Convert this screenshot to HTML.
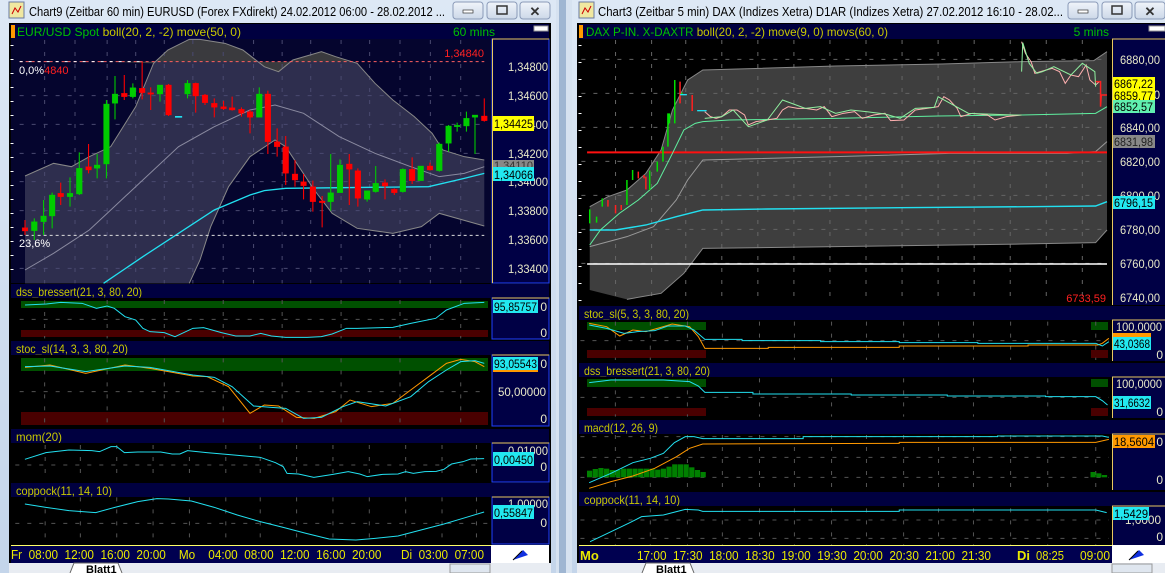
<!DOCTYPE html>
<html><head><meta charset="utf-8">
<style>
html,body{margin:0;padding:0;background:#cfdcec;overflow:hidden}
svg{display:block;font-family:"Liberation Sans",Arial,sans-serif}
</style></head><body>
<svg width="1165" height="573" viewBox="0 0 1165 573" xmlns="http://www.w3.org/2000/svg">
<defs>
<linearGradient id="tb" x1="0" y1="0" x2="0" y2="1"><stop offset="0" stop-color="#dde8f5"/><stop offset="1" stop-color="#c4d5ea"/></linearGradient>
<linearGradient id="btn" x1="0" y1="0" x2="0" y2="1"><stop offset="0" stop-color="#f0f4fa"/><stop offset="1" stop-color="#ccd8e8"/></linearGradient>
</defs>
<rect width="1165" height="573" fill="#cfdcec"/>
<rect x="556" y="0" width="16" height="573" fill="#d6e2f0"/>
<rect x="559" y="0" width="7" height="573" fill="#9fb6d2"/>

<!-- ============ LEFT WINDOW ============ -->
<rect x="0" y="0" width="556" height="573" fill="url(#tb)"/>
<rect x="9" y="2" width="15" height="16" fill="#f0e8a0" stroke="#6a7aa0"/>
<path d="M12 14 L15 8 L18 12 L21 6" stroke="#c00" fill="none"/>
<text x="29" y="16" font-size="12.5" fill="#000" textLength="416" lengthAdjust="spacingAndGlyphs">Chart9 (Zeitbar 60 min)  EURUSD (Forex FXdirekt) 24.02.2012 06:00 - 28.02.2012 ...</text>
<g stroke="#8a9ab8" fill="url(#btn)">
<rect x="453" y="2" width="30" height="17" rx="3"/><rect x="487" y="2" width="30" height="17" rx="3"/><rect x="520" y="2" width="30" height="17" rx="3"/>
</g>
<rect x="463" y="10" width="10" height="3" fill="#fff" stroke="#333" stroke-width="0.7"/>
<rect x="497" y="6" width="10" height="8" fill="none" stroke="#333" stroke-width="1.5"/>
<text x="535" y="16" font-size="13" font-weight="bold" fill="#333" text-anchor="middle">✕</text>

<rect x="9" y="23" width="542" height="540" fill="#000"/>
<rect x="11" y="24" width="538" height="15" fill="#000040"/>
<rect x="11" y="25" width="4" height="13" fill="#ff9900"/>
<text x="17" y="36" font-size="12" fill="#00c000" textLength="224" lengthAdjust="spacingAndGlyphs">EUR/USD Spot <tspan fill="#c8c800">boll(20, 2, -2) move(50, 0)</tspan></text>
<text x="453" y="36" font-size="12" fill="#00c000">60 mins</text>
<rect x="534" y="26" width="14" height="5" fill="#fff" stroke="#999"/>

<rect x="11" y="39" width="481" height="244" fill="#05052e"/>
<g transform="scale(0.35714,0.33333)">
<polygon fill="#2e2e4e" points="70,528 150,490 200,500 250,470 310,440 380,320 430,190 470,150 530,118 560,118 630,130 680,150 740,200 780,215 820,180 900,155 940,170 1000,190 1050,250 1100,300 1160,350 1210,400 1240,450 1300,470 1356,480 1356,678 1230,640 1180,680 1100,700 1000,685 930,640 880,570 800,440 770,420 700,470 640,560 590,680 560,780 530,850 70,850"/>
<polygon fill="#3a3a3e" points="430,190 470,150 530,118 560,118 630,130 680,150 740,200 780,215 820,180 900,155 940,170 990,185 300,185"/>
<g stroke="#4a4a70" stroke-dasharray="4,8" fill="none">
<path d="M125 120V850M210 120V850M300 120V850M380 120V850M460 120V850M540 120V850M625 120V850M710 120V850M790 120V850M870 120V850M955 120V850M1035 120V850M1120 120V850M1205 120V850M1290 120V850" vector-effect="non-scaling-stroke"/>
<path d="M55 287H1356M55 373H1356M55 460H1356M55 545H1356M55 632H1356M55 805H1356" vector-effect="non-scaling-stroke"/>
</g>
<polyline fill="none" stroke="#8a8aa0" vector-effect="non-scaling-stroke" points="70,810 150,760 250,690 300,640 400,540 500,440 600,380 700,330 770,315 850,340 950,410 1050,460 1150,500 1230,530 1300,520 1356,500"/>
<polyline fill="none" stroke="#888" vector-effect="non-scaling-stroke" points="70,528 150,490 200,500 250,470 310,440 380,320 430,190 470,150 530,118 560,118 630,130 680,150 740,200 780,215 820,180 900,155 940,170 1000,190 1050,250 1100,300 1160,350 1210,400 1240,450 1300,470 1356,480"/>
<polyline fill="none" stroke="#888" vector-effect="non-scaling-stroke" points="1356,678 1230,640 1180,680 1100,700 1000,685 930,640 880,570 800,440 770,420 700,470 640,560 590,680 560,780 530,850"/>
<polyline fill="none" stroke="#22e0f0" stroke-width="1.3" vector-effect="non-scaling-stroke" points="290,850 400,770 500,700 600,630 700,585 740,572 800,565 1200,560 1300,535 1356,520"/>
<path d="M55 185H1356" stroke="#ff6060" stroke-dasharray="3,3" vector-effect="non-scaling-stroke"/>
<path d="M55 185H400" stroke="#fff" stroke-dasharray="3,6" vector-effect="non-scaling-stroke"/>
<path d="M55 706H1356" stroke="#ddd" stroke-dasharray="3,3" vector-effect="non-scaling-stroke"/>
<rect x="490" y="348" width="20" height="5" fill="#22e0f0"/>
<g fill="#ff0000" stroke="#ff0000">
<path d="M70 660V705M170 548V615M248 432V520M348 225V300M398 185V298M422 262V330M472 252V348M548 248V338M574 282V315M600 295V352M626 303V330M650 290V332M676 322V350M700 330V400M750 272V462M776 385V470M800 408V555M826 480V560M850 522V598M876 542V635M902 588V682M978 462V615M1002 505V620M1078 538V598M1104 565V585M1154 472V552M1204 488V512M1356 295V365" stroke-width="3"/>
<rect x="62" y="683" width="16" height="10"/><rect x="162" y="580" width="16" height="10"/><rect x="240" y="500" width="16" height="10"/><rect x="340" y="280" width="16" height="10"/><rect x="390" y="265" width="16" height="13"/><rect x="414" y="278" width="16" height="5"/><rect x="464" y="255" width="16" height="90"/><rect x="540" y="250" width="16" height="38"/><rect x="566" y="285" width="16" height="23"/><rect x="592" y="310" width="16" height="12"/><rect x="618" y="320" width="16" height="6"/><rect x="642" y="323" width="16" height="7"/><rect x="668" y="328" width="16" height="12"/><rect x="692" y="335" width="16" height="17"/><rect x="742" y="282" width="16" height="143"/><rect x="768" y="425" width="16" height="15"/><rect x="792" y="440" width="16" height="80"/><rect x="818" y="522" width="16" height="18"/><rect x="842" y="545" width="16" height="12"/><rect x="868" y="560" width="16" height="45"/><rect x="894" y="603" width="16" height="5"/><rect x="970" y="492" width="16" height="16"/><rect x="994" y="512" width="16" height="83"/><rect x="1070" y="548" width="16" height="10"/><rect x="1096" y="568" width="16" height="10"/><rect x="1146" y="508" width="16" height="34"/><rect x="1196" y="498" width="16" height="12"/><rect x="1348" y="348" width="16" height="14"/>
</g>
<g fill="#00cc00" stroke="#00cc00">
<path d="M96 655V720M122 600V705M146 578V685M196 532V620M222 457V585M272 462V535M298 300V535M322 228V358M372 250V295M448 255V305M525 240V295M726 262V350M926 462V632M952 478V578M1028 572V605M1052 498V578M1128 505V578M1178 498V542M1230 428V515M1256 375V455M1280 368V395M1306 335V395M1330 345V462" stroke-width="3"/>
<rect x="88" y="665" width="16" height="27"/><rect x="114" y="648" width="16" height="17"/><rect x="138" y="585" width="16" height="63"/><rect x="188" y="580" width="16" height="10"/><rect x="214" y="505" width="16" height="77"/><rect x="264" y="495" width="16" height="10"/><rect x="290" y="312" width="16" height="180"/><rect x="314" y="282" width="16" height="28"/><rect x="364" y="263" width="16" height="27"/><rect x="440" y="255" width="16" height="27"/><rect x="517" y="250" width="16" height="32"/><rect x="718" y="282" width="16" height="70"/><rect x="918" y="578" width="16" height="27"/><rect x="944" y="495" width="16" height="83"/><rect x="1020" y="572" width="16" height="26"/><rect x="1044" y="550" width="16" height="25"/><rect x="1120" y="508" width="16" height="67"/><rect x="1170" y="498" width="16" height="44"/><rect x="1222" y="432" width="16" height="80"/><rect x="1248" y="378" width="16" height="52"/><rect x="1272" y="376" width="16" height="4"/><rect x="1298" y="355" width="16" height="23"/><rect x="1322" y="345" width="16" height="7"/>
</g>
</g>
<text x="19" y="74" font-size="11" fill="#fff">0,0%<tspan fill="#ff2020">4840</tspan></text>
<text x="19" y="247" font-size="11" fill="#fff">23,6%</text>
<text x="484" y="57" font-size="11" fill="#ff2020" text-anchor="end">1,34840</text>
<path d="M12 45V283" stroke="#fff" stroke-dasharray="1,13" stroke-width="3"/>
<rect x="492" y="39" width="57" height="244" fill="#000045" stroke="#2040ff"/>
<path d="M492 39H549M492.5 39V283" stroke="#e8c860"/>
<g font-size="12" fill="#e8e8c8">
<text x="508" y="71" textLength="40" lengthAdjust="spacingAndGlyphs">1,34800</text><text x="508" y="100" textLength="40" lengthAdjust="spacingAndGlyphs">1,34600</text><text x="508" y="129" textLength="40" lengthAdjust="spacingAndGlyphs">1,34400</text><text x="508" y="158" textLength="40" lengthAdjust="spacingAndGlyphs">1,34200</text><text x="508" y="186" textLength="40" lengthAdjust="spacingAndGlyphs">1,34000</text><text x="508" y="215" textLength="40" lengthAdjust="spacingAndGlyphs">1,33800</text><text x="508" y="244" textLength="40" lengthAdjust="spacingAndGlyphs">1,33600</text><text x="508" y="273" textLength="40" lengthAdjust="spacingAndGlyphs">1,33400</text>
</g>
<rect x="493" y="116" width="41" height="15" fill="#ffff00"/><text x="494" y="128" font-size="12" fill="#000" textLength="39" lengthAdjust="spacingAndGlyphs">1,34425</text>
<rect x="493" y="160" width="41" height="9" fill="#888"/><text x="494" y="169" font-size="11" fill="#333" textLength="39" lengthAdjust="spacingAndGlyphs">1,34110</text>
<rect x="493" y="167" width="41" height="14" fill="#22e8f0"/><text x="494" y="179" font-size="12" fill="#000" textLength="39" lengthAdjust="spacingAndGlyphs">1,34066</text>

<!-- dss panel -->
<rect x="11" y="284" width="538" height="14" fill="#000040"/>
<text x="16" y="296" font-size="12" fill="#c8c800" textLength="126" lengthAdjust="spacingAndGlyphs">dss_bressert(21, 3, 80, 20)</text>
<rect x="11" y="298" width="481" height="41" fill="#000"/>
<rect x="21" y="301" width="467" height="7" fill="#005000"/>
<rect x="21" y="330" width="467" height="7" fill="#4a0000"/>
<g transform="translate(0,280) scale(0.35714,0.33333)">
<g stroke="#555" stroke-dasharray="4,8"><path d="M125 60V175M300 60V175M460 60V175M625 60V175M790 60V175M955 60V175M1120 60V175M1290 60V175M55 118H1356" vector-effect="non-scaling-stroke"/></g>
<polyline fill="none" stroke="#22e0f0" vector-effect="non-scaling-stroke" points="70,75 130,72 170,67 230,70 270,85 300,78 320,85 350,110 380,120 400,145 420,155 460,158 490,170 540,145 570,143 620,158 660,168 700,168 730,160 760,168 800,172 860,172 900,170 930,162 970,145 1000,145 1100,142 1150,130 1220,115 1250,90 1300,70 1356,67"/>
<g stroke="#555" stroke-dasharray="4,8"><path d="M125 235V435M300 235V435M460 235V435M625 235V435M790 235V435M955 235V435M1120 235V435M1290 235V435M55 335H1356" vector-effect="non-scaling-stroke"/></g>
<polyline fill="none" stroke="#ff9900" vector-effect="non-scaling-stroke" points="70,262 140,255 240,280 350,255 420,265 540,288 580,290 640,320 700,400 740,375 780,378 830,412 880,415 940,395 980,360 1040,380 1100,370 1150,330 1200,290 1250,250 1290,238 1330,245 1356,260"/>
<polyline fill="none" stroke="#22e0f0" vector-effect="non-scaling-stroke" points="70,260 140,258 240,275 350,258 420,262 540,285 600,292 650,320 710,378 760,382 800,385 850,415 900,412 960,380 1000,365 1080,378 1150,350 1200,305 1250,270 1290,245 1330,242 1356,250"/>
</g>
<rect x="492" y="298" width="57" height="41" fill="#000045" stroke="#2040ff"/><path d="M492 298H549" stroke="#e8c860"/>
<rect x="493" y="300" width="45" height="13" fill="#22e8f0"/><text x="494" y="311" font-size="12" fill="#000" textLength="43" lengthAdjust="spacingAndGlyphs">95,85757</text>
<text x="547" y="311" font-size="12" fill="#e8e8c8" text-anchor="end">0</text><text x="547" y="337" font-size="12" fill="#e8e8c8" text-anchor="end">0</text>

<!-- stoc panel -->
<rect x="11" y="341" width="538" height="14" fill="#000040"/>
<text x="16" y="353" font-size="12" fill="#c8c800" textLength="112" lengthAdjust="spacingAndGlyphs">stoc_sl(14, 3, 3, 80, 20)</text>
<rect x="11" y="355" width="481" height="71" fill="#000"/>
<rect x="21" y="358" width="467" height="13" fill="#005000"/>
<rect x="21" y="412" width="467" height="13" fill="#4a0000"/>
<g transform="translate(0,280) scale(0.35714,0.33333)">
<g stroke="#555" stroke-dasharray="4,8"><path d="M125 235V435M300 235V435M460 235V435M625 235V435M790 235V435M955 235V435M1120 235V435M1290 235V435M55 335H1356" vector-effect="non-scaling-stroke"/></g>
<polyline fill="none" stroke="#ff9900" vector-effect="non-scaling-stroke" points="70,262 140,255 240,280 350,255 420,265 540,288 580,290 640,320 700,400 740,375 780,378 830,412 880,415 940,395 980,360 1040,380 1100,370 1150,330 1200,290 1250,250 1290,238 1330,245 1356,260"/>
<polyline fill="none" stroke="#22e0f0" vector-effect="non-scaling-stroke" points="70,260 140,258 240,275 350,258 420,262 540,285 600,292 650,320 710,378 760,382 800,385 850,415 900,412 960,380 1000,365 1080,378 1150,350 1200,305 1250,270 1290,245 1330,242 1356,250"/>
</g>
<rect x="492" y="355" width="57" height="71" fill="#000045" stroke="#2040ff"/><path d="M492 355H549" stroke="#e8c860"/>
<rect x="493" y="369" width="45" height="3" fill="#ff9900"/>
<rect x="493" y="357" width="45" height="13" fill="#22e8f0"/><text x="494" y="368" font-size="12" fill="#000" textLength="43" lengthAdjust="spacingAndGlyphs">93,05543</text>
<text x="547" y="368" font-size="12" fill="#e8e8c8" text-anchor="end">0</text>
<text x="498" y="396" font-size="12" fill="#e8e8c8" textLength="48" lengthAdjust="spacingAndGlyphs">50,00000</text>
<text x="547" y="423" font-size="12" fill="#e8e8c8" text-anchor="end">0</text>

<!-- mom panel -->
<rect x="11" y="429" width="538" height="14" fill="#000040"/>
<text x="16" y="441" font-size="12" fill="#c8c800" textLength="46" lengthAdjust="spacingAndGlyphs">mom(20)</text>
<rect x="11" y="443" width="481" height="39" fill="#000"/>
<g transform="translate(0,420) scale(0.3827,0.33333)">
<g stroke="#555" stroke-dasharray="4,8"><path d="M118 75V180M210 75V180M305 75V180M400 75V180M495 75V180M590 75V180M680 75V180M775 75V180M870 75V180M965 75V180M1060 75V180M1155 75V180M1245 75V180M40 135H1280" vector-effect="non-scaling-stroke"/></g>
<polyline fill="none" stroke="#22e0f0" vector-effect="non-scaling-stroke" points="65,118 120,98 180,90 240,92 260,95 290,80 305,80 325,98 360,96 420,96 450,102 470,102 490,92 540,98 600,104 680,112 720,128 740,140 750,160 780,162 820,172 870,163 910,155 940,162 960,170 1000,163 1040,162 1060,155 1080,160 1110,155 1140,154 1160,148 1180,132 1210,125 1230,117 1265,116"/>
</g>
<rect x="492" y="443" width="57" height="39" fill="#000045" stroke="#2040ff"/><path d="M492 443H549" stroke="#e8c860"/>
<text x="508" y="455" font-size="12" fill="#e8e8c8" textLength="40" lengthAdjust="spacingAndGlyphs">0,01000</text>
<rect x="493" y="452" width="41" height="14" fill="#22e8f0"/><text x="494" y="464" font-size="12" fill="#000" textLength="39" lengthAdjust="spacingAndGlyphs">0,00450</text>
<text x="547" y="471" font-size="12" fill="#e8e8c8" text-anchor="end">0</text>

<!-- coppock panel -->
<rect x="11" y="483" width="538" height="14" fill="#000040"/>
<text x="16" y="495" font-size="12" fill="#c8c800" textLength="96" lengthAdjust="spacingAndGlyphs">coppock(11, 14, 10)</text>
<rect x="11" y="497" width="481" height="47" fill="#000"/>
<g transform="translate(0,420) scale(0.3827,0.33333)">
<g stroke="#555" stroke-dasharray="4,8"><path d="M118 232V370M210 232V370M305 232V370M400 232V370M495 232V370M590 232V370M680 232V370M775 232V370M870 232V370M965 232V370M1060 232V370M1155 232V370M1245 232V370M40 310H1280" vector-effect="non-scaling-stroke"/></g>
<polyline fill="none" stroke="#22e0f0" vector-effect="non-scaling-stroke" points="65,252 120,262 180,272 250,278 300,262 360,245 410,236 440,237 500,243 560,262 620,285 680,305 740,322 800,340 860,357 930,360 980,355 1040,348 1100,330 1160,312 1210,295 1265,276"/>
</g>
<rect x="492" y="497" width="57" height="47" fill="#000045" stroke="#2040ff"/><path d="M492 497H549" stroke="#e8c860"/>
<text x="508" y="508" font-size="12" fill="#e8e8c8" textLength="40" lengthAdjust="spacingAndGlyphs">1,00000</text>
<rect x="493" y="505" width="41" height="14" fill="#22e8f0"/><text x="494" y="517" font-size="12" fill="#000" textLength="39" lengthAdjust="spacingAndGlyphs">0,55847</text>
<text x="547" y="527" font-size="12" fill="#e8e8c8" text-anchor="end">0</text>

<rect x="11" y="545" width="480" height="18" fill="#000050"/>
<path d="M11 545.5H491" stroke="#ffff66"/>
<text x="11" y="559" font-size="12.5" fill="#e8e800" xml:space="preserve" textLength="473" lengthAdjust="spacingAndGlyphs">Fr  08:00  12:00  16:00  20:00    Mo    04:00  08:00  12:00  16:00  20:00      Di  03:00  07:00</text>
<rect x="491" y="545" width="58" height="18" fill="#fff"/>
<path d="M513 560 L523 550 L528 555 Z" fill="#1030e0"/><path d="M513 560 L522 551" stroke="#000"/>
<rect x="9" y="563" width="542" height="10" fill="#e8ecf2"/>
<path d="M70 573 L74 563 H118 L122 573" fill="#fff" stroke="#666"/>
<text x="86" y="573" font-size="11" font-weight="bold" fill="#000">Blatt1</text>
<rect x="450" y="564" width="40" height="9" fill="#dfe6ef" stroke="#999"/>

<!-- ============ RIGHT WINDOW ============ -->
<rect x="572" y="0" width="593" height="573" fill="url(#tb)"/>
<rect x="579" y="2" width="15" height="16" fill="#f0e8a0" stroke="#6a7aa0"/>
<path d="M582 14 L585 8 L588 12 L591 6" stroke="#c00" fill="none"/>
<text x="598" y="16" font-size="12.5" fill="#000" textLength="465" lengthAdjust="spacingAndGlyphs">Chart3 (Zeitbar 5 min)  DAX (Indizes Xetra) D1AR (Indizes Xetra) 27.02.2012 16:10 - 28.02...</text>
<g stroke="#8a9ab8" fill="url(#btn)">
<rect x="1068" y="2" width="30" height="17" rx="3"/><rect x="1102" y="2" width="30" height="17" rx="3"/><rect x="1135" y="2" width="30" height="17" rx="3"/>
</g>
<rect x="1078" y="10" width="10" height="3" fill="#fff" stroke="#333" stroke-width="0.7"/>
<rect x="1112" y="6" width="10" height="8" fill="none" stroke="#333" stroke-width="1.5"/>
<text x="1150" y="16" font-size="13" font-weight="bold" fill="#333" text-anchor="middle">✕</text>

<rect x="577" y="23" width="588" height="540" fill="#000"/>
<rect x="579" y="24" width="586" height="15" fill="#000040"/>
<rect x="579" y="25" width="4" height="13" fill="#ff9900"/>
<text x="586" y="36" font-size="12" fill="#00c000" textLength="302" lengthAdjust="spacingAndGlyphs">DAX P-IN. X-DAXTR <tspan fill="#c8c800">boll(20, 2, -2) move(9, 0) movs(60, 0)</tspan></text>
<text x="1109" y="36" font-size="12" fill="#00c000" text-anchor="end">5 mins</text>
<rect x="1149" y="26" width="16" height="5" fill="#fff" stroke="#999"/>

<rect x="579" y="39" width="533" height="266" fill="#000"/>
<g transform="translate(570,0) scale(0.3795,0.33333)">
<polygon fill="#3e3e3e" points="52,620 100,590 150,570 200,520 240,450 270,330 310,240 350,210 500,205 700,198 980,192 1100,188 1190,185 1380,182 1415,155 1415,690 1385,728 1190,732 700,740 350,745 300,820 240,880 150,898 52,870"/>
<g stroke="#666" stroke-dasharray="4,8"><path d="M120 120V900M215 120V900M305 120V900M400 120V900M495 120V900M590 120V900M685 120V900M780 120V900M875 120V900M970 120V900M1065 120V900M1160 120V900M1255 120V900M1350 120V900M30 178H1415M30 280H1415M30 382H1415M30 484H1415M30 586H1415M30 688H1415M30 790H1415" vector-effect="non-scaling-stroke"/></g>
<polyline fill="none" stroke="#888" vector-effect="non-scaling-stroke" points="52,620 100,590 150,570 200,520 240,450 270,330 310,240 350,210 500,205 700,198 980,192 1100,188 1190,185 1380,182 1415,155"/>
<polyline fill="none" stroke="#888" vector-effect="non-scaling-stroke" points="1415,690 1385,728 1190,732 700,740 350,745 300,820 240,880 150,898"/>
<polyline fill="none" stroke="#999" vector-effect="non-scaling-stroke" points="52,740 150,710 220,680 280,600 310,540 350,480 700,470 1000,460 1310,460 1385,455 1415,425"/>
<path d="M45 457H1415" stroke="#ff1010" stroke-width="2" vector-effect="non-scaling-stroke"/>
<path d="M45 792H1415" stroke="#fff" stroke-width="1.5" vector-effect="non-scaling-stroke"/>
<polyline fill="none" stroke="#22e0f0" stroke-width="1.4" vector-effect="non-scaling-stroke" points="52,690 120,690 200,675 280,650 350,630 520,627 870,623 1210,620 1385,618 1415,605"/>
<polyline fill="none" stroke="#60f0a0" vector-effect="non-scaling-stroke" points="52,735 80,690 130,640 180,600 230,550 270,460 300,390 330,370 350,365 420,360 700,355 970,348 1190,345 1385,340 1415,320"/>
<g stroke="#00e000" stroke-width="1.5" vector-effect="non-scaling-stroke" fill="none">
<path d="M52 670V628M70 668V650M85 620V595M150 615V540M165 540V510M210 570V512M230 515V485M245 485V440M258 440V340M262 370V340M276 370V240M295 282V278" vector-effect="non-scaling-stroke"/>
</g>
<g stroke="#ff2020" stroke-width="1.5" fill="none">
<path d="M100 620V600M120 640V615M135 630V615M180 535V515M195 535V525M200 568V530M290 310V245M322 333V285" vector-effect="non-scaling-stroke"/>
</g>
<polyline fill="none" stroke="#ffb0b0" vector-effect="non-scaling-stroke" points="355,335 370,350 385,355 400,350 420,330 440,330 460,345 470,375 490,365 520,360 545,355 560,330 575,320 600,325 620,325 650,330 670,320 690,350 720,340 750,335 770,355 800,345 830,340 845,362 880,360 910,330 940,325 970,320 985,290 1000,300 1020,325 1030,350 1060,340 1100,345 1120,360 1150,350 1190,345"/>
<polyline fill="none" stroke="#90f0a0" vector-effect="non-scaling-stroke" points="355,355 400,350 430,330 470,380 520,360 560,300 620,325 660,320 700,340 740,330 780,335 830,342 870,355 910,325 960,322 970,290 1050,340 1170,345 1190,345"/>
<polyline fill="none" stroke="#ffb0b0" vector-effect="non-scaling-stroke" points="1190,125 1200,160 1215,185 1225,220 1240,215 1270,205 1290,215 1305,250 1320,225 1340,230 1360,195 1370,240 1385,255 1395,245"/>
<polyline fill="none" stroke="#90f0a0" vector-effect="non-scaling-stroke" points="1190,215 1193,128 1210,190 1230,220 1245,215 1275,200 1320,225 1350,190 1383,215 1385,260"/>
<polyline fill="none" stroke="#ff2020" stroke-width="1.5" vector-effect="non-scaling-stroke" points="1385,245 1398,245 1398,320 1400,285 1415,285"/>
<rect x="290" y="282" width="18" height="4" fill="#22e0f0"/><rect x="335" y="330" width="25" height="4" fill="#22e0f0"/>
</g>
<path d="M580 45V305" stroke="#fff" stroke-dasharray="1,16" stroke-width="3"/>
<text x="1106" y="302" font-size="11" fill="#ff2020" text-anchor="end">6733,59</text>
<rect x="1112" y="39" width="53" height="266" fill="#000045"/>
<path d="M1112.5 39V305M1112 39H1165" stroke="#e8c860"/>
<g font-size="12" fill="#e8e8c8">
<text x="1120" y="64" textLength="40" lengthAdjust="spacingAndGlyphs">6880,00</text><text x="1120" y="99" textLength="40" lengthAdjust="spacingAndGlyphs">6860,00</text><text x="1120" y="132" textLength="40" lengthAdjust="spacingAndGlyphs">6840,00</text><text x="1120" y="166" textLength="40" lengthAdjust="spacingAndGlyphs">6820,00</text><text x="1120" y="200" textLength="40" lengthAdjust="spacingAndGlyphs">6800,00</text><text x="1120" y="234" textLength="40" lengthAdjust="spacingAndGlyphs">6780,00</text><text x="1120" y="268" textLength="40" lengthAdjust="spacingAndGlyphs">6760,00</text><text x="1120" y="302" textLength="40" lengthAdjust="spacingAndGlyphs">6740,00</text>
</g>
<rect x="1113" y="77" width="42" height="13" fill="#ffff00"/><text x="1114" y="88" font-size="12" fill="#000" textLength="39" lengthAdjust="spacingAndGlyphs">6867,22</text>
<rect x="1113" y="89" width="42" height="12" fill="#ffff00"/><text x="1114" y="100" font-size="12" fill="#000" textLength="39" lengthAdjust="spacingAndGlyphs">6859,77</text>
<rect x="1113" y="100" width="42" height="13" fill="#60f0b0"/><text x="1114" y="111" font-size="12" fill="#000" textLength="39" lengthAdjust="spacingAndGlyphs">6852,57</text>
<rect x="1113" y="135" width="42" height="13" fill="#888"/><text x="1114" y="146" font-size="12" fill="#222" textLength="39" lengthAdjust="spacingAndGlyphs">6831,98</text>
<rect x="1113" y="196" width="42" height="13" fill="#22e8f0"/><text x="1114" y="207" font-size="12" fill="#000" textLength="39" lengthAdjust="spacingAndGlyphs">6796,15</text>

<!-- right stoc -->
<rect x="579" y="306" width="586" height="14" fill="#000040"/>
<text x="584" y="318" font-size="12" fill="#c8c800" textLength="105" lengthAdjust="spacingAndGlyphs">stoc_sl(5, 3, 3, 80, 20)</text>
<rect x="579" y="320" width="533" height="41" fill="#000"/>
<rect x="587" y="322" width="119" height="8" fill="#005000"/><rect x="1091" y="322" width="17" height="8" fill="#005000"/>
<rect x="587" y="350" width="119" height="8" fill="#4a0000"/><rect x="1091" y="350" width="17" height="8" fill="#4a0000"/>
<g transform="translate(480,280) scale(0.4367,0.33333)">
<g stroke="#555" stroke-dasharray="4,8"><path d="M310 125V240M390 125V240M475 125V240M555 125V240M640 125V240M720 125V240M805 125V240M885 125V240M970 125V240M1050 125V240M1130 125V240M1215 125V240M1300 125V240M1410 125V240M230 182H1440" vector-effect="non-scaling-stroke"/></g>
<polyline fill="none" stroke="#ff9900" vector-effect="non-scaling-stroke" points="250,130 290,140 320,168 350,150 380,155 420,140 440,132 480,140 500,170 515,205 660,205 660,202 960,202 960,198 1255,198 1255,195 1415,195 1425,190 1440,175"/>
<polyline fill="none" stroke="#22e0f0" vector-effect="non-scaling-stroke" points="250,135 290,145 330,160 360,155 400,152 430,138 470,138 490,150 515,178 600,178 600,182 780,182 780,185 960,185 960,188 1140,188 1140,190 1410,190 1425,198 1440,185"/>
</g>
<rect x="1112" y="320" width="53" height="41" fill="#000045"/><path d="M1112.5 320V361M1112 320H1165" stroke="#e8c860"/>
<text x="1116" y="331" font-size="12" fill="#e8e8c8" textLength="46" lengthAdjust="spacingAndGlyphs">100,0000</text>
<rect x="1113" y="333" width="38" height="5" fill="#ff9900"/>
<rect x="1113" y="337" width="38" height="13" fill="#22e8f0"/><text x="1114" y="348" font-size="12" fill="#000" textLength="36" lengthAdjust="spacingAndGlyphs">43,0368</text>
<text x="1163" y="359" font-size="12" fill="#e8e8c8" text-anchor="end">0</text>

<!-- right dss -->
<rect x="579" y="363" width="586" height="14" fill="#000040"/>
<text x="584" y="375" font-size="12" fill="#c8c800" textLength="126" lengthAdjust="spacingAndGlyphs">dss_bressert(21, 3, 80, 20)</text>
<rect x="579" y="377" width="533" height="41" fill="#000"/>
<rect x="587" y="379" width="119" height="8" fill="#005000"/><rect x="1091" y="379" width="17" height="8" fill="#005000"/>
<rect x="587" y="408" width="119" height="8" fill="#4a0000"/><rect x="1091" y="408" width="17" height="8" fill="#4a0000"/>
<g transform="translate(480,280) scale(0.4367,0.33333)">
<g stroke="#555" stroke-dasharray="4,8"><path d="M310 295V410M475 295V410M640 295V410M805 295V410M970 295V410M1130 295V410M1300 295V410M230 352H1440" vector-effect="non-scaling-stroke"/></g>
<polyline fill="none" stroke="#22e0f0" vector-effect="non-scaling-stroke" points="250,308 300,300 420,300 480,305 500,318 515,337 625,337 625,342 850,342 850,345 1070,345 1070,348 1295,348 1295,350 1410,350 1425,362 1437,375"/>
</g>
<rect x="1112" y="377" width="53" height="41" fill="#000045"/><path d="M1112.5 377V418M1112 377H1165" stroke="#e8c860"/>
<text x="1116" y="388" font-size="12" fill="#e8e8c8" textLength="46" lengthAdjust="spacingAndGlyphs">100,0000</text>
<rect x="1113" y="396" width="38" height="13" fill="#22e8f0"/><text x="1114" y="407" font-size="12" fill="#000" textLength="36" lengthAdjust="spacingAndGlyphs">31,6632</text>
<text x="1163" y="416" font-size="12" fill="#e8e8c8" text-anchor="end">0</text>

<!-- right macd -->
<rect x="579" y="420" width="586" height="14" fill="#000040"/>
<text x="584" y="432" font-size="12" fill="#c8c800" textLength="74" lengthAdjust="spacingAndGlyphs">macd(12, 26, 9)</text>
<rect x="579" y="434" width="533" height="56" fill="#000"/>
<g transform="translate(480,280) scale(0.4367,0.33333)">
<g stroke="#555" stroke-dasharray="4,8"><path d="M310 465V630M390 465V630M475 465V630M555 465V630M640 465V630M720 465V630M805 465V630M885 465V630M970 465V630M1050 465V630M1130 465V630M1215 465V630M1300 465V630M1410 465V630M230 470H1440M230 532H1440M230 592H1440" vector-effect="non-scaling-stroke"/></g>
<g fill="#008000"><rect x="245" y="572" width="12" height="20"/><rect x="258" y="567" width="12" height="25"/><rect x="271" y="564" width="12" height="28"/><rect x="284" y="566" width="12" height="26"/><rect x="297" y="570" width="12" height="22"/><rect x="310" y="570" width="12" height="22"/><rect x="323" y="566" width="12" height="26"/><rect x="336" y="566" width="12" height="26"/><rect x="349" y="566" width="12" height="26"/><rect x="362" y="566" width="12" height="26"/><rect x="375" y="566" width="12" height="26"/><rect x="388" y="566" width="12" height="26"/><rect x="401" y="569" width="12" height="23"/><rect x="414" y="566" width="12" height="26"/><rect x="427" y="560" width="12" height="32"/><rect x="440" y="553" width="12" height="39"/><rect x="453" y="553" width="12" height="39"/><rect x="466" y="553" width="12" height="39"/><rect x="479" y="562" width="12" height="30"/><rect x="492" y="570" width="12" height="22"/><rect x="505" y="576" width="12" height="16"/><rect x="1398" y="576" width="12" height="16"/><rect x="1411" y="580" width="12" height="12"/><rect x="1424" y="585" width="12" height="7"/></g>
<polyline fill="none" stroke="#ff9900" vector-effect="non-scaling-stroke" points="250,625 300,605 350,588 400,565 450,530 480,505 510,492 960,490 960,487 1410,487 1440,478"/>
<polyline fill="none" stroke="#22e0f0" vector-effect="non-scaling-stroke" points="250,608 300,580 350,548 390,535 420,520 445,488 470,470 490,470 510,476 740,476 740,470 1185,470 1185,468 1425,468 1440,472"/>
</g>
<rect x="1112" y="434" width="53" height="56" fill="#000045"/><path d="M1112.5 434V490M1112 434H1165" stroke="#e8c860"/>
<rect x="1113" y="435" width="42" height="13" fill="#ff9900"/><text x="1114" y="446" font-size="12" fill="#000" textLength="40" lengthAdjust="spacingAndGlyphs">18,5604</text>
<text x="1163" y="446" font-size="12" fill="#e8e8c8" text-anchor="end">0</text>
<text x="1163" y="484" font-size="12" fill="#e8e8c8" text-anchor="end">0</text>

<!-- right coppock -->
<rect x="579" y="492" width="586" height="14" fill="#000040"/>
<text x="584" y="504" font-size="12" fill="#c8c800" textLength="96" lengthAdjust="spacingAndGlyphs">coppock(11, 14, 10)</text>
<rect x="579" y="506" width="533" height="39" fill="#000"/>
<g transform="translate(480,280) scale(0.4367,0.33333)">
<g stroke="#555" stroke-dasharray="4,8"><path d="M310 685V795M390 685V795M475 685V795M555 685V795M640 685V795M720 685V795M805 685V795M885 685V795M970 685V795M1050 685V795M1130 685V795M1215 685V795M1300 685V795M1410 685V795M230 720H1440M230 775H1440" vector-effect="non-scaling-stroke"/></g>
<polyline fill="none" stroke="#22e0f0" vector-effect="non-scaling-stroke" points="252,785 300,755 340,730 370,710 420,705 450,695 470,688 500,690 510,694 960,694 960,690 1410,690 1435,698"/>
</g>
<rect x="1112" y="506" width="53" height="39" fill="#000045"/><path d="M1112.5 506V545M1112 506H1165" stroke="#e8c860"/>
<text x="1125" y="524" font-size="12" fill="#e8e8c8" textLength="36" lengthAdjust="spacingAndGlyphs">1,0000</text>
<rect x="1113" y="507" width="36" height="13" fill="#22e8f0"/><text x="1114" y="518" font-size="12" fill="#000" textLength="34" lengthAdjust="spacingAndGlyphs">1,5429</text>
<text x="1163" y="541" font-size="12" fill="#e8e8c8" text-anchor="end">0</text>

<rect x="579" y="545" width="533" height="18" fill="#000050"/>
<path d="M579 545.5H1112" stroke="#ffff66"/>
<text x="580" y="560" font-size="13" font-weight="bold" fill="#e8e800">Mo</text>
<text x="637" y="560" font-size="12.5" fill="#e8e800" xml:space="preserve" textLength="354" lengthAdjust="spacingAndGlyphs">17:00  17:30  18:00  18:30  19:00  19:30  20:00  20:30  21:00  21:30</text>
<text x="1017" y="560" font-size="13" font-weight="bold" fill="#e8e800">Di</text>
<text x="1036" y="560" font-size="12.5" fill="#e8e800" textLength="28" lengthAdjust="spacingAndGlyphs">08:25</text>
<text x="1080" y="560" font-size="12.5" fill="#e8e800" textLength="30" lengthAdjust="spacingAndGlyphs">09:00</text>
<rect x="1112" y="545" width="53" height="18" fill="#fff"/>
<path d="M1129 560 L1139 550 L1144 555 Z" fill="#1030e0"/><path d="M1129 560 L1138 551" stroke="#000"/>
<rect x="577" y="563" width="588" height="10" fill="#e8ecf2"/>
<path d="M642 573 L646 563 H690 L694 573" fill="#fff" stroke="#666"/>
<text x="656" y="573" font-size="11" font-weight="bold" fill="#000">Blatt1</text>
<rect x="1112" y="564" width="40" height="9" fill="#dfe6ef" stroke="#999"/>
</svg>
</body></html>
